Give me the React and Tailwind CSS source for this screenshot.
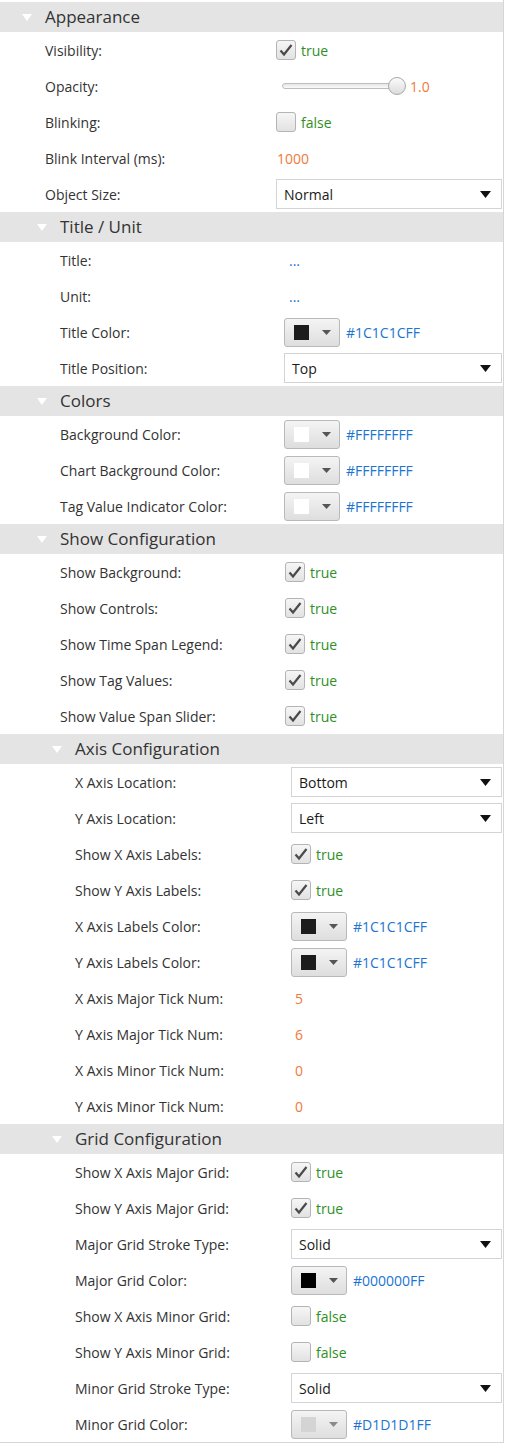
import React from 'react'

const FONT = { fontFamily: '"Open Sans", "Noto Sans", sans-serif' }

// each group knows how deep it sits and where its value column starts
const sections = [
    {
        title: 'Appearance',
        head: 'pl-[22px]',
        label: 'w-[276px] pl-[45px]',
        rows: [
            { label: 'Visibility:', type: 'check', value: true },
            { label: 'Opacity:', type: 'slider', value: '1.0' },
            { label: 'Blinking:', type: 'check', value: false },
            { label: 'Blink Interval (ms):', type: 'number', value: '1000' },
            { label: 'Object Size:', type: 'select', value: 'Normal' },
        ],
    },
    {
        title: 'Title / Unit',
        head: 'pl-[37px]',
        label: 'w-[284px] pl-[60px]',
        rows: [
            { label: 'Title:', type: 'more' },
            { label: 'Unit:', type: 'more' },
            { label: 'Title Color:', type: 'color', swatch: 'bg-[#1c1c1c]', value: '#1C1C1CFF' },
            { label: 'Title Position:', type: 'select', value: 'Top' },
        ],
    },
    {
        title: 'Colors',
        head: 'pl-[37px]',
        label: 'w-[284px] pl-[60px]',
        rows: [
            { label: 'Background Color:', type: 'color', swatch: 'bg-white', value: '#FFFFFFFF' },
            { label: 'Chart Background Color:', type: 'color', swatch: 'bg-white', value: '#FFFFFFFF' },
            { label: 'Tag Value Indicator Color:', type: 'color', swatch: 'bg-white', value: '#FFFFFFFF' },
        ],
    },
    {
        title: 'Show Configuration',
        head: 'pl-[37px]',
        label: 'w-[285px] pl-[60px]',
        rows: [
            { label: 'Show Background:', type: 'check', value: true },
            { label: 'Show Controls:', type: 'check', value: true },
            { label: 'Show Time Span Legend:', type: 'check', value: true },
            { label: 'Show Tag Values:', type: 'check', value: true },
            { label: 'Show Value Span Slider:', type: 'check', value: true },
        ],
    },
    {
        title: 'Axis Configuration',
        head: 'pl-[52px]',
        label: 'w-[291px] pl-[75px]',
        rows: [
            { label: 'X Axis Location:', type: 'select', value: 'Bottom' },
            { label: 'Y Axis Location:', type: 'select', value: 'Left' },
            { label: 'Show X Axis Labels:', type: 'check', value: true },
            { label: 'Show Y Axis Labels:', type: 'check', value: true },
            { label: 'X Axis Labels Color:', type: 'color', swatch: 'bg-[#1c1c1c]', value: '#1C1C1CFF' },
            { label: 'Y Axis Labels Color:', type: 'color', swatch: 'bg-[#1c1c1c]', value: '#1C1C1CFF' },
            { label: 'X Axis Major Tick Num:', type: 'number', value: '5', pad: true },
            { label: 'Y Axis Major Tick Num:', type: 'number', value: '6', pad: true },
            { label: 'X Axis Minor Tick Num:', type: 'number', value: '0', pad: true },
            { label: 'Y Axis Minor Tick Num:', type: 'number', value: '0', pad: true },
        ],
    },
    {
        title: 'Grid Configuration',
        head: 'pl-[52px]',
        label: 'w-[291px] pl-[75px]',
        rows: [
            { label: 'Show X Axis Major Grid:', type: 'check', value: true },
            { label: 'Show Y Axis Major Grid:', type: 'check', value: true },
            { label: 'Major Grid Stroke Type:', type: 'select', value: 'Solid' },
            { label: 'Major Grid Color:', type: 'color', swatch: 'bg-black', value: '#000000FF' },
            { label: 'Show X Axis Minor Grid:', type: 'check', value: false },
            { label: 'Show Y Axis Minor Grid:', type: 'check', value: false },
            { label: 'Minor Grid Stroke Type:', type: 'select', value: 'Solid' },
            { label: 'Minor Grid Color:', type: 'color', swatch: 'bg-[#d1d1d1]', value: '#D1D1D1FF', muted: true },
        ],
    },
]

function CheckBox({ checked }) {
    return (
        <div className="flex items-center gap-[5px]">
            <span className="flex h-[20px] w-[20px] items-center justify-center rounded-[3px] border border-[#b4b4b4] bg-gradient-to-b from-[#f6f6f6] to-[#e2e2e2]">
                {checked && (
                    <svg width="14" height="13" viewBox="0 0 14 13">
                        <path d="M1.5 6.5 L5 10.5 L12.5 1" fill="none" stroke="#4a4a4a" strokeWidth="2.2" />
                    </svg>
                )}
            </span>
            <span className="text-[#2f8f1f]">{checked ? 'true' : 'false'}</span>
        </div>
    )
}

function Slider({ value }) {
    return (
        <div className="flex items-center">
            <div className="relative ml-[6px] h-[18px] w-[124px]">
                <div className="absolute left-0 right-[8px] top-[6px] h-[6px] rounded-full border border-[#bdbdbd] bg-gradient-to-b from-[#e6e6e6] to-[#fafafa]" />
                <div className="absolute right-0 top-0 h-[18px] w-[18px] rounded-full border border-[#a8a8a8] bg-gradient-to-b from-[#fbfbfb] to-[#dcdcdc]" />
            </div>
            <span className="ml-[4px] text-[#f07a3a]">{value}</span>
        </div>
    )
}

function Select({ value }) {
    return (
        <div className="flex h-[30px] w-full items-center justify-between border border-[#d4d4d4] bg-white pl-[7px] pr-[10px] text-[#1a1a1a]">
            <span>{value}</span>
            <svg width="11" height="7" viewBox="0 0 11 7">
                <path d="M0 0 H11 L5.5 7 Z" fill="#111" />
            </svg>
        </div>
    )
}

function ColorPicker({ swatch, value, muted }) {
    return (
        <div className="flex items-center gap-[6px]">
            <div className="flex h-[29px] w-[56px] items-center rounded-[3px] border border-[#b9b9b9] bg-gradient-to-b from-[#f4f4f4] to-[#dedede] pl-[9px]">
                <span className={`h-[15px] w-[15px] ${swatch} ${muted ? 'opacity-90' : ''}`} />
                <svg className="ml-[13px]" width="9" height="5" viewBox="0 0 9 5">
                    <path d="M0 0 H9 L4.5 5 Z" fill={muted ? '#8a8a8a' : '#555'} />
                </svg>
            </div>
            <span className="text-[#1b74d1]">{value}</span>
        </div>
    )
}

function Value({ row }) {
    switch (row.type) {
        case 'check':
            return <CheckBox checked={row.value} />
        case 'slider':
            return <Slider value={row.value} />
        case 'number':
            return <span className={`text-[#f07a3a] ${row.pad ? 'pl-[4px]' : 'pl-[1px]'}`}>{row.value}</span>
        case 'select':
            return <Select value={row.value} />
        case 'color':
            return <ColorPicker swatch={row.swatch} value={row.value} muted={row.muted} />
        case 'more':
            return <span className="pl-[5px] text-[#1b74d1]">...</span>
        default:
            return null
    }
}

function Section({ section }) {
    return (
        <div>
            <div className={`flex h-[30px] items-center bg-[#e4e4e4] ${section.head}`}>
                <svg width="10" height="7" viewBox="0 0 10 7">
                    <path d="M0 0 H10 L5 7 Z" fill="#fff" />
                </svg>
                <span className="ml-[13px] text-[17px] text-[#333]">{section.title}</span>
            </div>
            {section.rows.map(row => (
                <div key={row.label} className="flex h-[36px] items-center">
                    <span className={`shrink-0 text-[#333] ${section.label}`}>{row.label}</span>
                    <div className="flex-1 pr-[1px]">
                        <Value row={row} />
                    </div>
                </div>
            ))}
        </div>
    )
}

export default function App() {
    return (
        <div className="h-[1445px] w-[506px] bg-white text-[14px]" style={FONT}>
            <div className="w-[504px] border-r border-b border-[#d6d6d6] pt-[2px]">
                {sections.map(section => (
                    <Section key={section.title} section={section} />
                ))}
            </div>
        </div>
    )
}
